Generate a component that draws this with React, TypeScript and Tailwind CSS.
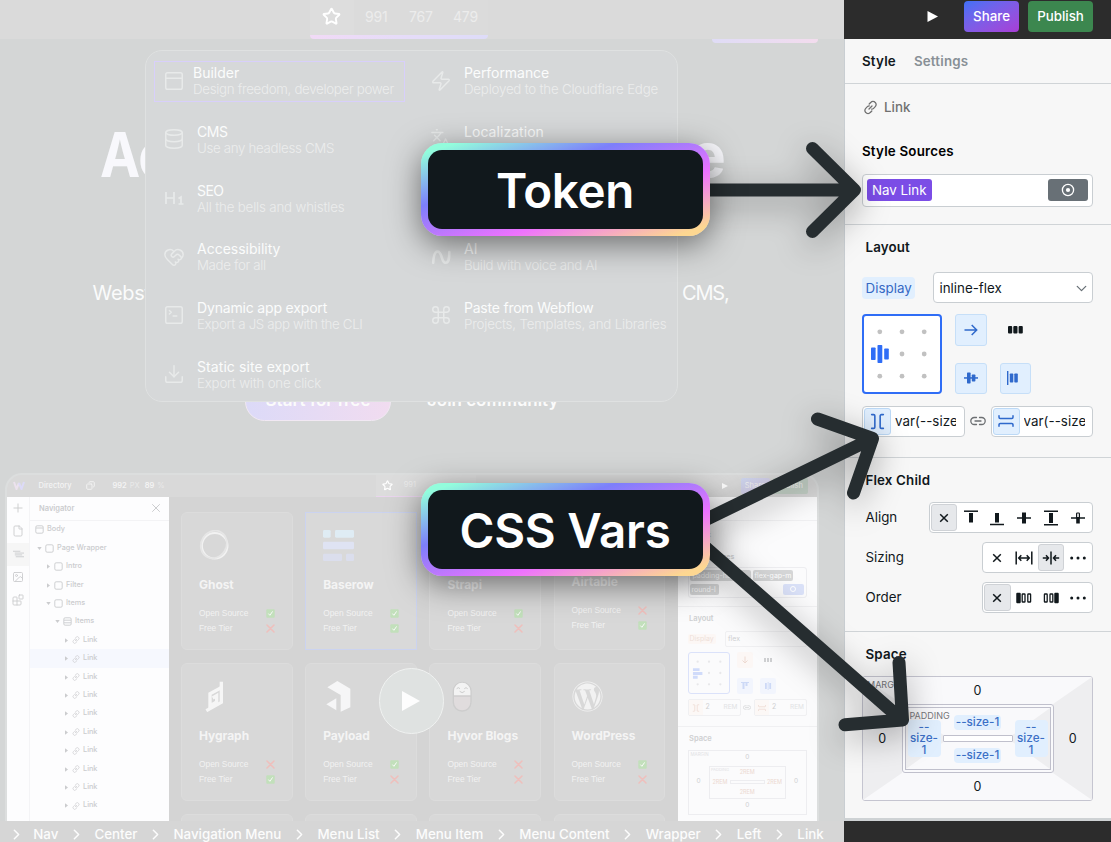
import React from "react";
import {
  PanelTop,
  Database,
  HeartHandshake,
  SquareTerminal,
  Download,
  Zap,
  Languages,
  Command,
  Star,
  ChevronRight,
  ChevronDown,
  Plus,
  File,
  Image as ImageIcon,
  Blocks,
  X,
  Copy,
} from "lucide-react";
import { FaWordpress } from "react-icons/fa";

/* ---------- small shared icons ---------- */

function ChainIcon({ className }: { className: string }) {
  return (
    <svg viewBox="0 0 16 16" className={className} fill="none" stroke="currentColor" strokeWidth="1.4" strokeLinecap="round">
      <path d="M6.600 4.200 8.200 2.700a3 3 0 0 1 4.900 0 3.100 3.100 0 0 1 0 4.400l-1.800 1.800a3 3 0 0 1-2 .9" />
      <path d="M9.400 11.800 7.800 13.300a3 3 0 0 1-4.900 0 3.100 3.100 0 0 1 0-4.400l1.800-1.800a3 3 0 0 1 2-.9" />
      <path d="m6.400 9.600 3.200-3.200" />
    </svg>
  );
}

function FlatLinkIcon({ className }: { className: string }) {
  return (
    <svg viewBox="0 0 16 10" className={className} fill="none" stroke="currentColor" strokeWidth="1.3" strokeLinecap="round">
      <path d="M6.500 1.500H4.300a3.500 3.500 0 0 0 0 7h2.200M9.500 1.500h2.200a3.500 3.500 0 0 1 0 7H9.500M5 5h6" />
    </svg>
  );
}

function GapColIcon({ className }: { className: string }) {
  return (
    <svg viewBox="0 0 16 16" className={className} fill="none" stroke="currentColor" strokeWidth="1.5" strokeLinecap="round" strokeLinejoin="round">
      <path d="M2.500 1.500h1.800a1.2 1.2 0 0 1 1.2 1.2v10.600a1.2 1.2 0 0 1-1.2 1.2H2.500M13.500 1.500h-1.800a1.2 1.2 0 0 0-1.2 1.2v10.600a1.2 1.2 0 0 0 1.2 1.2h1.800" />
    </svg>
  );
}

function GapRowIcon({ className }: { className: string }) {
  return (
    <svg viewBox="0 0 16 16" className={className} fill="none" stroke="currentColor" strokeWidth="1.5" strokeLinecap="round" strokeLinejoin="round">
      <path d="M1 2.800v1.500a1.2 1.2 0 0 0 1.2 1.200h11.600a1.2 1.2 0 0 0 1.2-1.200V2.800M1 13.200v-1.500a1.2 1.2 0 0 1 1.200-1.200h11.600a1.2 1.2 0 0 1 1.200 1.200v1.500" />
    </svg>
  );
}

/* ---------- builder top bar ---------- */

function CanvasTopBar() {
  return (
    <div className="flex h-[39px] shrink-0 bg-[#dadada] pl-[310px]">
      <div className="flex w-[178px] flex-col">
        <div className="flex h-[35px] items-center bg-[#dbdbdb] text-[14px] text-[#ececec]">
          <span className="flex h-full w-[44px] items-center justify-center bg-[#dddddd] pr-[1px] pb-[2px] text-white">
            <Star size={19} strokeWidth={2.4} />
          </span>
          <span className="w-[44px] pb-[2px] pl-[11px] tracking-[-0.2px]">991</span>
          <span className="w-[44px] pb-[2px] pl-[11px] tracking-[-0.2px]">767</span>
          <span className="w-[44px] pb-[2px] pl-[11px] tracking-[-0.2px]">479</span>
        </div>
        <div className="h-[4px] rounded-b-sm bg-gradient-to-r from-[#f1daf6] via-[#e6dcf8] to-[#dedcf8]" />
      </div>
    </div>
  );
}

/* ---------- hero menu ---------- */

type MenuEntry = { title: string; desc: string; icon: React.ReactNode; t?: string; d?: string };

const iconProps = { size: 22, strokeWidth: 1.6 };

const leftMenu: MenuEntry[] = [
  { title: "Builder", desc: "Design freedom, developer power", icon: <PanelTop {...iconProps} />, t: "tracking-[0px]", d: "tracking-[-0.310px]" },
  { title: "CMS", desc: "Use any headless CMS", icon: <Database {...iconProps} />, t: "tracking-[-0.4px]", d: "tracking-[-0.320px]" },
  {
    title: "SEO",
    desc: "All the bells and whistles",
    icon: (
      <svg viewBox="0 0 22 22" className="size-[22px]" fill="none" stroke="currentColor" strokeWidth="1.7">
        <path d="M3 5v12M11 5v12M3 11h8M15.500 11.500l2.500-1.500v7M15.500 17h5" />
      </svg>
    ),
    t: "tracking-[-0.6px]",
    d: "tracking-[-0.170px]",
  },
  { title: "Accessibility", desc: "Made for all", icon: <HeartHandshake {...iconProps} />, t: "tracking-[0px]", d: "tracking-[-0.350px]" },
  { title: "Dynamic app export", desc: "Export a JS app with the CLI", icon: <SquareTerminal {...iconProps} />, t: "tracking-[-0.170px]", d: "tracking-[-0.330px]" },
  { title: "Static site export", desc: "Export with one click", icon: <Download {...iconProps} />, t: "tracking-[0.080px]", d: "tracking-[-0.200px]" },
];

const rightMenu: MenuEntry[] = [
  { title: "Performance", desc: "Deployed to the Cloudflare Edge", icon: <Zap {...iconProps} />, t: "tracking-[-0.050px]", d: "tracking-[-0.210px]" },
  { title: "Localization", desc: "", icon: <Languages {...iconProps} />, t: "tracking-[0.050px]" },
  { title: "", desc: "", icon: null },
  {
    title: "AI",
    desc: "Build with voice and AI",
    icon: (
      <svg viewBox="0 0 22 22" className="size-[22px]" fill="none" stroke="currentColor" strokeWidth="2.600" strokeLinecap="round">
        <path d="M3.200 16.800C3.600 9.500 4.500 5.500 7.500 5.500c5 0 3.500 11.200 8 11.200 3.300 0 3.800-3.500 3.800-10.700" />
      </svg>
    ),
    d: "tracking-[-0.3px]",
  },
  { title: "Paste from Webflow", desc: "Projects, Templates, and Libraries", icon: <Command {...iconProps} />, t: "tracking-[-0.220px]", d: "tracking-[-0.180px]" },
];

function MenuItem({ item, selected }: { item: MenuEntry; selected?: boolean }) {
  return (
    <div
      className={
        selected
          ? "-mb-[4px] -ml-[9px] -mt-[4px] flex h-[41px] w-[251px] items-center gap-[8px] border border-[#d8cffb] pl-[8px]"
          : "flex h-[33px] items-center gap-[12px] whitespace-nowrap"
      }
    >
      <span className="-mt-[2px] flex w-[22px] justify-center text-[#e8eaea]">{item.icon}</span>
      <div className="flex flex-col whitespace-nowrap leading-[16.500px]">
        <span className={`text-[14px] text-[#fbfcfc] ${item.t ?? ""}`}>{item.title}</span>
        <span className={`-mt-[0.500px] h-[16.500px] text-[13.300px] font-light text-[#eceded] ${item.d ?? ""}`}>{item.desc}</span>
      </div>
    </div>
  );
}

function FeatureMenu() {
  return (
    <div className="absolute left-[145px] top-[11px] flex h-[352px] w-[533px] rounded-[17px] border border-[#dfe1e1] bg-[#d6d8d9] pl-[17px] pt-[14px]">
      <div className="flex w-[267px] flex-col gap-[25.700px]">
        {leftMenu.map((item, i) => (
          <MenuItem key={item.title} item={item} selected={i === 0} />
        ))}
      </div>
      <div className="flex flex-col gap-[25.700px]">
        {rightMenu.map((item, i) => (
          <MenuItem key={i} item={item} />
        ))}
      </div>
    </div>
  );
}

/* ---------- product preview ---------- */

const tree: { label: string; depth: number; kind: string; open?: boolean }[] = [
  { label: "Body", depth: -1, kind: "body" },
  { label: "Page Wrapper", depth: 0, kind: "box", open: true },
  { label: "Intro", depth: 1, kind: "box" },
  { label: "Filter", depth: 1, kind: "box" },
  { label: "Items", depth: 1, kind: "box", open: true },
  { label: "Items", depth: 2, kind: "list", open: true },
  ...Array.from({ length: 10 }, () => ({ label: "Link", depth: 3, kind: "link" })),
];

const indent: Record<string, string> = {
  "-1": "pl-[5px]",
  "0": "pl-[7px]",
  "1": "pl-[16px]",
  "2": "pl-[25px]",
  "3": "pl-[34px]",
};

function TreeIcon({ kind }: { kind: string }) {
  if (kind === "link") return <ChainIcon className="size-[8px]" />;
  return (
    <svg viewBox="0 0 9 9" className="size-[9px]" fill="none" stroke="currentColor" strokeWidth="0.9">
      <rect x="0.800" y="0.800" width="7.400" height="7.400" rx="1.300" />
      {kind === "body" && <path d="M1 3h7" />}
      {kind === "list" && <path d="M1 3.200h7M1 5.800h7" />}
    </svg>
  );
}

function Navigator() {
  return (
    <div className="flex w-[162px] shrink-0 bg-[#fdfdfe] text-[#cbccce]">
      <div className="flex w-[23px] flex-col items-center border-r border-[#f4f4f6]">
        <span className="flex h-[23px] items-center"><Plus size={14} strokeWidth={1.600} /></span>
        <span className="flex h-[23px] items-center"><File size={12} strokeWidth={1.800} /></span>
        <span className="flex h-[23px] w-full items-center justify-center bg-[#f6f6f6]">
          <svg viewBox="0 0 12 8" className="h-[8px] w-[11px]" stroke="currentColor" strokeWidth="1">
            <path d="M0 1h8M2 3h10M2 5h8M3 7h9" />
          </svg>
        </span>
        <span className="flex h-[23px] items-center"><ImageIcon size={12} strokeWidth={1.800} /></span>
        <span className="flex h-[23px] items-center"><Blocks size={12} strokeWidth={1.800} /></span>
      </div>
      <div className="flex flex-1 flex-col">
        <div className="flex h-[24px] items-center justify-between border-b border-[#f3f3f5] pl-[9px] pr-[6px]">
          <span className="pt-[1px] text-[7.500px] font-semibold">Navigator</span>
          <X size={14} strokeWidth={1.700} />
        </div>
        {tree.map((row, i) => (
          <div
            key={i}
            className={`flex h-[18.400px] shrink-0 items-center gap-[3px] pt-[0.500px] text-[7.300px] font-medium ${indent[String(row.depth)]} ${i === 7 ? "bg-[#f6f8fe]" : ""}`}
          >
            {row.depth >= 0 && (
              <svg viewBox="0 0 5 5" className="size-[5px]" fill="currentColor">
                <path d={row.open ? "M0.300 1h4.400L2.500 4z" : "M1 0.300v4.400L4 2.500z"} />
              </svg>
            )}
            <TreeIcon kind={row.kind} />
            <span>{row.label}</span>
          </div>
        ))}
      </div>
    </div>
  );
}

function Mark({ ok }: { ok: boolean }) {
  return ok ? (
    <svg viewBox="0 0 9 9" className="size-[9px]">
      <rect x="0.300" y="0.300" width="8.400" height="8.400" rx="1" fill="#c2e0bb" />
      <path d="m2.400 4.600 1.500 1.700 2.700-3.900" fill="none" stroke="#fafafa" strokeWidth="1" />
    </svg>
  ) : (
    <svg viewBox="0 0 9 9" className="size-[9px]" stroke="#efbfbc" strokeWidth="1.500" strokeLinecap="round">
      <path d="m1 1 7 7M8 1 1 8" />
    </svg>
  );
}

const logos: Record<string, React.ReactNode> = {
  Ghost: (
    <svg viewBox="0 0 31 31" className="size-[31px]" fill="none" stroke="#f2f2f2">
      <circle cx="15.800" cy="15.800" r="12.800" strokeWidth="1.800" />
      <ellipse cx="14.600" cy="14.600" rx="12.600" ry="14.200" strokeWidth="1.800" stroke="#e6e6e6" transform="rotate(30 15 15)" />
    </svg>
  ),
  Baserow: (
    <svg viewBox="0 0 93 93" className="size-[31px]">
      <g fill="#dfecf4"><rect width="23" height="23" rx="4" /><rect x="36" width="57" height="23" rx="4" /></g>
      <rect y="35" width="93" height="23" rx="4" fill="#dfe3f3" />
      <g fill="#dbdeed"><rect y="71" width="57" height="22" rx="4" /><rect x="69" y="71" width="24" height="22" rx="4" /></g>
    </svg>
  ),
  Hygraph: (
    <svg viewBox="0 0 93 93" className="size-[31px]" fill="none" stroke="#f6f6f6" strokeWidth="10">
      <path d="M67 2v62L22 89" />
      <path d="M66 20 33 38v36l20-11V44l-12 7" />
    </svg>
  ),
  Payload: (
    <svg viewBox="0 0 93 93" className="size-[31px]" fill="#f6f6f7">
      <path d="M43 0 82 23v56L53 92V42L13 19z" />
      <path d="M10 70 40 52v36z" />
    </svg>
  ),
  "Hyvor Blogs": (
    <svg viewBox="0 0 93 93" className="size-[31px]">
      <rect x="19" y="4" width="53" height="86" rx="26" fill="#e0dcdd" stroke="#cdcdcd" strokeWidth="4" />
      <path d="M21 44V30a24.500 24.500 0 0 1 49 0v14z" fill="#f3f3f3" />
      <path d="M19 45h53" stroke="#cdcdcd" strokeWidth="4" />
      <path d="M29 23q5-6 10 0M52 23q5-6 10 0M38 31q7 8 15 0" fill="none" stroke="#cdcdcd" strokeWidth="3" />
    </svg>
  ),
  WordPress: <FaWordpress className="size-[31px] text-[#f2f2f2]" />,
};

type Card = { name: string; open: boolean; free: boolean; selected?: boolean };

const cardRows: Card[][] = [
  [
    { name: "Ghost", open: true, free: false },
    { name: "Baserow", open: true, free: true, selected: true },
    { name: "Strapi", open: true, free: false },
    { name: "Airtable", open: false, free: true },
  ],
  [
    { name: "Hygraph", open: false, free: true },
    { name: "Payload", open: true, free: false },
    { name: "Hyvor Blogs", open: false, free: false },
    { name: "WordPress", open: true, free: false },
  ],
];

function CardGrid() {
  return (
    <div className="flex flex-1 flex-col gap-[13px] overflow-hidden bg-[#d4d4d4] pl-[12px] pt-[15px]">
      {cardRows.map((row, r) => (
        <div key={r} className="flex gap-[12.500px]">
          {row.map((c) => (
            <div
              key={c.name}
              className={`flex h-[138px] w-[111.700px] shrink-0 flex-col border pl-[17px] pr-[17px] pt-[17px] ${
                c.selected ? "border-[#cbd3f0] bg-[#d9d9d9]" : "rounded-[6px] border-[#dcdcdc] bg-[#d8d8d8]"
              }`}
            >
              <div className={c.name === "Airtable" ? "h-[28.500px]" : "h-[31px]"}>{logos[c.name]}</div>
              <span className="mt-[16px] whitespace-nowrap text-[12px] font-bold leading-[16px] tracking-[-0.050px] text-[#f4f4f4]">{c.name}</span>
              <div className="mt-[13px] flex h-[15px] items-center justify-between font-['Liberation_Sans',sans-serif] text-[8.400px] text-[#f2f2f2]">
                <span>Open Source</span>
                <Mark ok={c.open} />
              </div>
              <div className="flex h-[15px] items-center justify-between font-['Liberation_Sans',sans-serif] text-[8.400px] text-[#f2f2f2]">
                <span>Free Tier</span>
                <Mark ok={c.free} />
              </div>
            </div>
          ))}
        </div>
      ))}
      <div className="flex gap-[12.500px]">
        {[0, 1, 2, 3].map((n) => (
          <div key={n} className="h-[20px] w-[111.700px] shrink-0 rounded-t-[6px] border border-[#dcdcdc] bg-[#d8d8d8]" />
        ))}
      </div>
    </div>
  );
}

function MiniPanel() {
  return (
    <div className="flex w-[138.500px] shrink-0 flex-col bg-[#fbfbfc] text-[7px] text-[#cfd0d2]">
      <div className="h-[24px] border-b border-[#f0f0f2]" />
      <div className="flex h-[86px] flex-col border-b border-[#f0f0f2] pl-[9.500px] pr-[9.500px]">
        <span className="mt-[9px] pl-[10px] leading-[10px]">Link</span>
        <span className="mt-[12px] font-semibold leading-[10px]">Style Sources</span>
        <div className="mt-[5px] flex h-[31px] flex-wrap content-center gap-x-[2px] gap-y-[3px] rounded-[3px] border border-[#ededf0] pl-[1px] leading-[11px] text-white">
          <span className="w-[61px] rounded-[2px] bg-[#d5d6d7] px-[3px]">padding-horiz-l</span>
          <span className="rounded-[2px] bg-[#d5d6d7] px-[2px]">flex-gap-m</span>
          <span className="w-[29px] rounded-[2px] bg-[#d5d6d7] px-[2px]">round-l</span>
          <span className="ml-[62px] flex w-[21px] items-center justify-center rounded-[2px] bg-[#dae1f8]">
            <span className="size-[6px] rounded-full border border-white" />
          </span>
        </div>
      </div>
      <div className="flex h-[120px] flex-col border-b border-[#f0f0f2] pl-[9.500px] pr-[9.500px] pt-[7px]">
        <span className="pl-[1.500px] text-[7.500px] font-semibold leading-[10px]">Layout</span>
        <div className="mt-[7px] flex h-[16.500px] items-center justify-between">
          <span className="rounded-[2px] bg-[#fcf7f5] px-[2px] text-[7px] text-[#eedfd9]">Display</span>
          <span className="flex h-full w-[82px] items-center rounded-[2px] border border-[#f0f0f2] pl-[2px]">flex</span>
        </div>
        <div className="mt-[5px] flex gap-[7px]">
          <div className="flex size-[42px] items-center rounded-[3px] border-[1.500px] border-[#dbe2fa] pl-[3px]">
            <svg viewBox="0 0 36 36" className="size-[34px]">
              <path d="M1 13h7v3H1zM1 17h10v3H1zM1 21h5v3H1z" fill="#d0dbfa" />
              <g fill="#e8e8ea"><circle cx="6" cy="6" r="1.200" /><circle cx="18" cy="6" r="1.200" /><circle cx="30" cy="6" r="1.200" /><circle cx="18" cy="18" r="1.200" /><circle cx="30" cy="18" r="1.200" /><circle cx="6" cy="30" r="1.200" /><circle cx="18" cy="30" r="1.200" /><circle cx="30" cy="30" r="1.200" /></g>
            </svg>
          </div>
          <div className="flex flex-col justify-between">
            <div className="flex items-center gap-[11px]">
              <span className="flex size-[16px] items-center justify-center rounded-[2px] bg-[#fcf7f5] text-[#eddad2]">
                <svg viewBox="0 0 8 8" className="size-[8px]" fill="none" stroke="currentColor"><path d="M4 0.500v6.500M1.500 4.500 4 7l2.500-2.500" /></svg>
              </span>
              <svg viewBox="0 0 8 4" className="h-[4px] w-[8px]" fill="currentColor"><path d="M0 0h2v4H0zM3 0h2v4H3zM6 0h2v4H6z" /></svg>
            </div>
            <div className="flex gap-[7px]">
              <span className="flex size-[16px] items-center justify-center rounded-[2px] bg-[#f2f5fd]">
                <svg viewBox="0 0 8 8" className="size-[8px]" fill="#cdd9f6"><path d="M0 0h8v1H0zM1.500 1h2v6h-2zM4.500 1h2v3h-2z" /></svg>
              </span>
              <span className="flex size-[16px] items-center justify-center rounded-[2px] bg-[#f2f5fd]">
                <svg viewBox="0 0 8 8" className="size-[8px]" fill="#cdd9f6"><path d="M3.700 0h.8v8h-.8zM1 1h1.800v6H1zM5.300 1h1.800v6H5.300z" /></svg>
              </span>
            </div>
          </div>
        </div>
        <div className="mt-[5px] flex h-[17px] items-center justify-between">
          {[0, 1].map((n) => (
            <React.Fragment key={n}>
              {n === 1 && <FlatLinkIcon className="h-[5px] w-[8px]" />}
              <span className="flex h-full w-[53px] items-center rounded-[2px] border border-[#f0f0f2]">
                <span className="flex h-full w-[14px] items-center justify-center bg-[#fcf8f6] text-[#eddad2]">
                  {n === 0 ? <GapColIcon className="size-[8px]" /> : <GapRowIcon className="size-[8px]" />}
                </span>
                <span className="flex-1 pl-[3px]">2</span>
                <span className="pr-[2px] text-[6.500px] text-[#e1e2e4]">REM</span>
              </span>
            </React.Fragment>
          ))}
        </div>
      </div>
      <div className="flex flex-col px-[9.500px] pt-[6px]">
        <span className="pl-[1.500px] text-[7.500px] font-semibold leading-[11px]">Space</span>
        <div className="mt-[6px] grid h-[65px] grid-cols-[20px_minmax(0,1fr)_20px] grid-rows-[15px_minmax(0,1fr)_15px] place-items-center border border-[#ededf0] text-[6.500px]">
          <span className="self-start justify-self-start pl-[2px] pt-[1px] text-[4.500px] text-[#e2e2e5]">MARGIN</span><span>0</span><span />
          <span>0</span>
          <div className="grid h-full w-full grid-cols-[21px_minmax(0,1fr)_21px] grid-rows-3 place-items-center border border-[#ededf0] text-[5.500px] text-[#ecd9d1]">
            <span className="-mt-[3px] text-[4px] text-[#e2e2e5]">PADDING</span><span>2REM</span><span />
            <span>2REM</span><span className="h-[4px] w-[35px] border border-[#ededf0]" /><span>2REM</span>
            <span /><span>2REM</span><span />
          </div>
          <span>0</span>
          <span /><span>0</span><span />
        </div>
      </div>
    </div>
  );
}

function ProductPreview() {
  return (
    <div className="relative ml-[5px] mt-[52px] flex h-[348px] w-[813.500px] shrink-0 flex-col overflow-hidden rounded-t-[17px] border-x-2 border-t-2 border-[#dcdede] bg-[#d9d9d9]">
      <div className="flex h-[22px] shrink-0 items-center text-[7.500px] text-[#f4f4f4]">
        <svg viewBox="0 0 12 9" className="ml-[5.500px] h-[9px] w-[12px]" fill="none" strokeWidth="2">
          <path d="M1 1l2.500 7L6 2" stroke="#ece2ee" />
          <path d="M6 2l2.500 6L11 1" stroke="#dcdaf8" />
        </svg>
        <span className="ml-[14px] w-[47px] font-medium">Directory</span>
        <Copy size={9} strokeWidth={2.400} className="-scale-x-100" />
        <span className="ml-[18px] font-semibold">992</span>
        <span className="ml-[3px] text-[#e9e9e9]">PX</span>
        <span className="ml-[5px] font-semibold">89</span>
        <span className="ml-[3px] text-[#e9e9e9]">%</span>
        <div className="ml-[211px] flex h-full w-[100px] items-center border-b-[1.500px] border-[#ead5ee] bg-[#dcdcdc]">
          <span className="flex w-[23px] justify-center text-white"><Star size={11} strokeWidth={2.600} /></span>
          <span className="pl-[5px] text-[#ebebeb]">991</span>
        </div>
        <svg viewBox="0 0 6 6" className="ml-auto size-[6px]" fill="#fff"><path d="M0 0 6 3 0 6z" /></svg>
        <span className="ml-[13px] flex h-[16px] w-[29px] items-center justify-center rounded-[2px] bg-gradient-to-br from-[#cdd5ee] to-[#dccfe9]">Share</span>
        <span className="ml-[3px] mr-[9px] flex h-[16px] w-[35px] items-center justify-center rounded-[2px] bg-[#c5d2c8]">Publish</span>
      </div>
      <div className="flex flex-1">
        <Navigator />
        <CardGrid />
        <MiniPanel />
      </div>
      <div className="absolute left-[371.500px] top-[193.500px] flex size-[65.500px] items-center justify-center rounded-full border border-[#f0f2f1] bg-[#dfe2e1]">
        <svg viewBox="0 0 18 20" className="h-[20px] w-[18px]" fill="#fdfdfd"><path d="M0 0 18 10 0 20z" /></svg>
      </div>
    </div>
  );
}

function Hero() {
  return (
    <div className="relative flex h-[782px] shrink-0 flex-col overflow-hidden bg-[#d4d6d6]">
      <div className="ml-[712px] h-[3.500px] w-[106px] shrink-0 rounded-b-[6px] bg-gradient-to-r from-[#dfdcf6] to-[#f3dcee]" />
      <div className="mt-[81px] flex h-[62px] shrink-0 justify-between pl-[99.500px] pr-[118px] text-[62px] font-bold leading-[62px] text-[#f8f8fc]">
        <span className="origin-left scale-x-[0.870] tracking-[-1px]">Ac</span>
        <span>e</span>
      </div>
      <div className="mt-[92px] flex h-[30px] shrink-0 justify-between pl-[92.500px] pr-[115.500px] text-[20px] leading-[30px] text-[#fafbfb]">
        <span className="tracking-[-0.300px]">Webst</span>
        <span className="tracking-[-1.200px]">CMS,</span>
      </div>
      <div className="mt-[74px] flex h-[39px] shrink-0 items-center pl-[245px] text-[17px] font-semibold text-[#fbfbfb]">
        <span className="flex h-full w-[146px] items-center justify-center rounded-full border border-[#f1e8f3] bg-gradient-to-r from-[#dcdaf8] to-[#f1dcf0]">
          Start for free
        </span>
        <span className="ml-[36px] tracking-[-0.030px]">Join community</span>
      </div>
      <ProductPreview />
      <FeatureMenu />
    </div>
  );
}

const crumbs = ["Nav", "Center", "Navigation Menu", "Menu List", "Menu Item", "Menu Content", "Wrapper", "Left", "Link"];

function Breadcrumbs() {
  return (
    <div className="flex h-[27px] shrink-0 items-center whitespace-nowrap bg-[#d6d6d6] text-[13.330px] font-medium text-[#fcfcfc]">
      {crumbs.map((c, i) => (
        <React.Fragment key={c}>
          <span className={`flex shrink-0 justify-center ${i === 0 ? "w-[33.200px]" : "w-[36.100px]"}`}>
            <ChevronRight size={17} strokeWidth={2.200} />
          </span>
          <span>{c}</span>
        </React.Fragment>
      ))}
    </div>
  );
}

/* ---------- style panel ---------- */

function Row({ label, children }: { label: string; children: React.ReactNode }) {
  return (
    <div className="flex h-[31px] items-center justify-between pl-[3.500px]">
      <span>{label}</span>
      <div className="flex h-[31px] rounded-[4px] border border-[#c9ced2] bg-white p-[1px]">{children}</div>
    </div>
  );
}

function Cell({ on, children }: { on?: boolean; children: React.ReactNode }) {
  return (
    <span
      className={`flex h-[27px] w-[26.750px] items-center justify-center ${
        on ? "rounded-[3px] border border-[#cfd2d6] bg-[#e6e8eb]" : ""
      }`}
    >
      <svg viewBox="0 0 18 18" className="size-[18px] shrink-0 text-[#11181c]" fill="none" stroke="currentColor" strokeWidth="1.500">
        {children}
      </svg>
    </span>
  );
}

const cross = <path d="m5.200 5.200 7.600 7.600M12.800 5.200l-7.600 7.600" strokeWidth="1.500" />;
const dots = (
  <g fill="currentColor" stroke="none">
    <circle cx="2.700" cy="9" r="1.500" />
    <circle cx="9" cy="9" r="1.500" />
    <circle cx="15.300" cy="9" r="1.500" />
  </g>
);

function BlueButton({ children }: { children: React.ReactNode }) {
  return (
    <span className="flex size-[31.500px] items-center justify-center rounded-[3px] border border-[#c6dff8] bg-[#e1effe] text-[#2f69cc]">
      {children}
    </span>
  );
}

function GapInput({ icon, w }: { icon: React.ReactNode; w: "a" | "b" }) {
  return (
    <div className={`flex h-[31.500px] items-center rounded-[4px] border border-[#c9ced2] bg-white p-[1px] ${w === "a" ? "w-[103px]" : "w-[102.500px]"}`}>
      <span className="flex h-[27.500px] w-[27px] items-center justify-center rounded-[3px] border border-[#bcd9f6] bg-[#e1effe] text-[#2f69cc]">
        {icon}
      </span>
      <span className="ml-[4px] mt-[1px] w-[61px] overflow-hidden whitespace-nowrap text-[13.330px] tracking-[0.050px]">var(--size</span>
    </div>
  );
}

function Bevel({ inner }: { inner?: boolean }) {
  return (
    <svg
      viewBox={inner ? "0 0 146 63" : "0 0 229 123"}
      preserveAspectRatio="none"
      className="absolute inset-0 size-full"
    >
      <path d="M0 0h229v123H0z" fill="#f9f9fb" />
      <path
        d={inner ? "M0 0 38 28v7L0 63zM146 0 108 28v7l38 28z" : "M0 0 39 27v69L0 123zM229 0 190 27v69l39 27z"}
        fill="#eeeef0"
      />
    </svg>
  );
}

const tag = "rounded-[4px] bg-[#e1effe] text-center font-medium text-[#3b6fc6]";

function SideTag() {
  return (
    <div className={`${tag} flex h-[37px] w-[33px] flex-col justify-center pt-[1px] leading-[11.200px]`}>
      <span>--</span>
      <span>size-</span>
      <span>1</span>
    </div>
  );
}

function StylePanel() {
  return (
    <div className="flex w-[267px] shrink-0 flex-col text-[13.330px] text-[#11181c]">
      <div className="flex h-[39px] shrink-0 items-start bg-[#2c2c2c] pt-[1px] font-medium text-white">
        <svg viewBox="0 0 11 11" className="ml-[83px] mt-[10px] size-[11px]" fill="#fff"><path d="M0.500 0 11 5.500 0.500 11z" strokeLinejoin="round" /></svg>
        <span className="ml-[26px] flex h-[31px] w-[55px] items-center justify-center rounded-[4px] bg-gradient-to-br from-[#3d70f6] to-[#a83cd6]">Share</span>
        <span className="ml-[9px] flex h-[31px] w-[65px] items-center justify-center rounded-[4px] bg-[#3c874f]">Publish</span>
      </div>
      <div className="flex h-[779px] shrink-0 flex-col border-l border-[#c9ced2] bg-[#f7f7f7]">
        <div className="flex h-[45px] shrink-0 items-center gap-[18px] border-b border-[#d0d4d7] pl-[17px] pt-[1px] font-semibold tracking-[0.200px]">
          <span>Style</span>
          <span className="text-[#889096]">Settings</span>
        </div>
        <div className="flex h-[141px] shrink-0 flex-col border-b border-[#d0d4d7] pl-[17px] pr-[18px]">
          <div className="mt-[15px] flex h-[16px] items-center gap-[6px] font-medium text-[#707070]">
            <ChainIcon className="ml-[1px] size-[15px]" />
            <span className="pt-[1px]">Link</span>
          </div>
          <span className="mt-[27px] font-semibold leading-[18px] tracking-[0.200px] text-black">Style Sources</span>
          <div className="mt-[14px] flex h-[33px] items-center justify-between rounded-[4px] border border-[#c9ced2] bg-white px-[4px] pb-[1px]">
            <span className="flex h-[22px] items-center rounded-[3px] bg-[#7b4de6] px-[5px] pt-[1px] text-white">Nav Link</span>
            <span className="flex h-[22px] w-[40px] items-center justify-center rounded-[3px] bg-[#687076]">
              <svg viewBox="0 0 14 14" className="size-[14px]" fill="none" stroke="#fff" strokeWidth="1.300">
                <circle cx="7" cy="7" r="5.600" />
                <circle cx="7" cy="7" r="2.100" fill="#fff" stroke="none" />
              </svg>
            </span>
          </div>
        </div>

        <div className="flex h-[233px] shrink-0 flex-col border-b border-[#d0d4d7] pl-[17px] pr-[18px]">
          <span className="mt-[13px] pl-[3.500px] font-semibold leading-[18px] tracking-[0.150px]">Layout</span>
          <div className="mt-[16px] flex h-[31px] items-center justify-between">
            <span className="mt-[1px] flex h-[22px] items-center rounded-[4px] bg-[#e1effe] px-[3.500px] pt-[1px] tracking-[0.050px] text-[#3569c4]">Display</span>
            <span className="flex h-full w-[160px] items-center justify-between rounded-[4px] border border-[#c9ced2] bg-white pl-[5.500px] pr-[2px]">
              <span className="pt-[2px]">inline-flex</span>
              <ChevronDown size={17} strokeWidth={1.800} className="mt-[1px] text-[#687076]" />
            </span>
          </div>
          <div className="mt-[11px] flex gap-[13px]">
            <div className="h-[80px] w-[80px] rounded-[4px] border-2 border-[#2f6df6] bg-white">
              <svg viewBox="0 0 76 76" className="size-[76px]">
                <g fill="#c1c1c1">
                  {[15.800, 38, 60.200].map((y) =>
                    [15.800, 38, 60.200].map((x) =>
                      x < 20 && y > 30 && y < 45 ? null : <circle key={`${x}-${y}`} cx={x} cy={y} r="2.400" />
                    )
                  )}
                </g>
                <g fill="#2f6df6">
                  <rect x="7" y="31.500" width="4.600" height="12.500" rx="0.800" />
                  <rect x="13.500" y="29" width="4.800" height="18" rx="0.800" />
                  <rect x="20.200" y="32.500" width="4.600" height="11" rx="0.800" />
                </g>
              </svg>
            </div>
            <div className="flex flex-col justify-between">
              <div className="flex items-center gap-[21px]">
                <BlueButton>
                  <svg viewBox="0 0 14 14" className="size-[14px]" fill="none" stroke="currentColor" strokeWidth="1.500"><path d="M0.500 7h12M7.700 2l5 5-5 5" /></svg>
                </BlueButton>
                <svg viewBox="0 0 15 8" className="h-[8px] w-[15px]" fill="#11181c">
                  <rect width="4.200" height="7.500" rx="1" /><rect x="5.300" width="4.200" height="7.500" rx="1" /><rect x="10.600" width="4.200" height="7.500" rx="1" />
                </svg>
              </div>
              <div className="flex gap-[13px]">
                <BlueButton>
                  <svg viewBox="0 0 16 14" className="h-[14px] w-[16px]" fill="currentColor">
                    <rect x="1" y="6.200" width="14" height="1.500" /><rect x="4" y="1.500" width="3.600" height="11" rx="0.700" /><rect x="8.800" y="3.500" width="3.600" height="7" rx="0.700" />
                  </svg>
                </BlueButton>
                <BlueButton>
                  <svg viewBox="0 0 14 14" className="mr-[4px] size-[14px]" fill="currentColor">
                    <rect x="1" width="1.400" height="14" /><rect x="3.800" y="2.500" width="3.500" height="9" rx="0.700" /><rect x="8.300" y="2.500" width="3.500" height="9" rx="0.700" />
                  </svg>
                </BlueButton>
              </div>
            </div>
          </div>
          <div className="mt-[11.500px] flex items-center justify-between">
            <GapInput w="a" icon={<GapColIcon className="size-[17px]" />} />
            <FlatLinkIcon className="h-[10px] w-[16px] text-[#6c6f72]" />
            <GapInput w="b" icon={<GapRowIcon className="size-[16px]" />} />
          </div>
        </div>

        <div className="flex h-[174px] shrink-0 flex-col border-b border-[#d0d4d7] pl-[17px] pr-[18px]">
          <span className="mt-[13px] pl-[3.500px] font-semibold leading-[18px] tracking-[0.150px]">Flex Child</span>
          <div className="mt-[13px] flex flex-col gap-[9px]">
            <Row label="Align">
              <Cell on>{cross}</Cell>
              <Cell><path d="M2 2.200h14" /><path d="M9 4v9.500" strokeWidth="4" /></Cell>
              <Cell><path d="M2 15.500h14" /><path d="M9 4v9.500" strokeWidth="4" /></Cell>
              <Cell><path d="M2 9h14" /><path d="M9 3.500v11" strokeWidth="4" /></Cell>
              <Cell><path d="M2 2.200h14M2 15.800h14" /><path d="M9 4v10" strokeWidth="4" /></Cell>
              <Cell><path d="M2 9h14" /><rect x="7.600" y="4" width="2.800" height="5" rx="0.800" strokeWidth="1.200" /><path d="M9 8v6.500" strokeWidth="3.600" /></Cell>
            </Row>
            <Row label="Sizing">
              <Cell>{cross}</Cell>
              <Cell><path d="M1.200 2.500v13M16.800 2.500v13M4 9h10M6.300 6.200 3.700 9l2.600 2.800M11.700 6.200 14.300 9l-2.600 2.800" /></Cell>
              <Cell on><path d="M9 2.500v13M0.800 9h5.500M11.700 9h5.500M4 6.200 6.500 9 4 11.800M14 6.200 11.500 9l2.500 2.800" /></Cell>
              <Cell>{dots}</Cell>
            </Row>
            <Row label="Order">
              <Cell on>{cross}</Cell>
              <Cell><rect x="1.500" y="4" width="4" height="10" rx="0.800" fill="currentColor" strokeWidth="0.500" /><rect x="7.200" y="5" width="2.800" height="8" rx="0.600" strokeWidth="1.300" /><rect x="12.800" y="5" width="2.800" height="8" rx="0.600" strokeWidth="1.300" /></Cell>
              <Cell><rect x="12.500" y="4" width="4" height="10" rx="0.800" fill="currentColor" strokeWidth="0.500" /><rect x="2.400" y="5" width="2.800" height="8" rx="0.600" strokeWidth="1.300" /><rect x="8" y="5" width="2.800" height="8" rx="0.600" strokeWidth="1.300" /></Cell>
              <Cell>{dots}</Cell>
            </Row>
          </div>
        </div>

        <div className="flex shrink-0 flex-col pl-[17px] pr-[18px]">
          <span className="mt-[13px] pl-[3.500px] font-semibold leading-[18px] tracking-[0.150px]">Space</span>
          <div className="relative mt-[13px] grid h-[125px] grid-cols-[38.500px_minmax(0,1fr)_38.500px] grid-rows-[27px_minmax(0,1fr)_27px] place-items-center overflow-hidden rounded-[3px] border border-[#c5c5d0] text-[12.500px]">
            <Bevel />
            <span className="relative self-start justify-self-start pl-[4px] pt-[1px] text-[9px] text-[#76767a]">MARGIN</span>
            <span className="relative pt-[1px]">0</span>
            <span />
            <span className="relative pt-[1px]">0</span>
            <div className="relative size-full rounded-[3px] border border-[#c0c0cc] bg-[#fafafc] p-[2px]">
              <div className="relative grid size-full grid-cols-[37px_minmax(0,1fr)_37px] grid-rows-[minmax(0,1fr)_7px_minmax(0,1fr)] place-items-center border border-[#c0c0cc] text-[11.700px]">
                <Bevel inner />
                <div className="relative col-start-1 row-span-3 row-start-1">
                  <SideTag />
                </div>
                <span className={`${tag} relative col-start-2 row-start-1 mt-[2px] h-[15px] w-[47px] leading-[15px]`}>--size-1</span>
                <span className="relative col-start-2 row-start-2 h-[7px] w-[70px] rounded-[1px] border border-[#c0c0cc] bg-white" />
                <span className={`${tag} relative col-start-2 row-start-3 h-[15px] w-[47px] leading-[15px]`}>--size-1</span>
                <div className="relative col-start-3 row-span-3 row-start-1">
                  <SideTag />
                </div>
                <span className="absolute left-[4px] top-[2px] text-[9px] leading-[12px] text-[#76767a]">PADDING</span>
              </div>
            </div>
            <span className="relative pt-[1px]">0</span>
            <span />
            <span className="relative pt-[1px]">0</span>
            <span />
          </div>
        </div>
      </div>
      <div className="h-[3px] shrink-0 bg-[#ced2d4]" />
      <div className="flex-1 bg-[#2c2c2c]" />
    </div>
  );
}

/* ---------- annotations ---------- */

function Arrows() {
  return (
    <svg
      viewBox="0 0 1111 842"
      className="pointer-events-none absolute inset-0 h-[842px] w-[1111px] drop-shadow-[0_8px_16px_rgba(0,0,0,0.35)]"
      fill="none"
      stroke="#262d30"
      strokeWidth="13"
      strokeLinecap="round"
      strokeLinejoin="round"
    >
      <path d="M700 190H854M812.500 148.500 854.500 190 812.500 231.500" />
      <path d="M700 522.300 872.500 438.500M817.500 419 872.500 438.500 853.500 493" />
      <path d="M700 542.700 902 720M899 662.500 902.500 720 845 724.700" />
    </svg>
  );
}

function Callout({ label, place, track }: { label: string; place: string; track: string }) {
  return (
    <div
      className={`absolute left-[421px] h-[93px] w-[289px] rounded-[21px] bg-[linear-gradient(to_bottom_right,#92fddc_6%,#7d7ffb_34%,#ed72fe_65%,#fdd791_94%)] p-[7px] shadow-[0_8px_32px_rgba(0,0,0,0.5)] ${place}`}
    >
      <div className="flex size-full items-center justify-center rounded-[14px] bg-[#11181c] pt-[2px] text-[47.500px] font-semibold text-white">
        <span className={track}>{label}</span>
      </div>
    </div>
  );
}

export default function App() {
  return (
    <div className="relative flex h-[842px] w-[1111px] overflow-hidden font-['Inter',sans-serif]">
      <div className="flex h-full w-[844px] shrink-0 flex-col overflow-hidden">
        <CanvasTopBar />
        <Hero />
        <Breadcrumbs />
      </div>
      <StylePanel />
      <Arrows />
      <Callout label="Token" place="top-[143px]" track="-ml-[1px] tracking-[-0.300px]" />
      <Callout label="CSS Vars" place="top-[483px]" track="-ml-[1px] tracking-[-0.200px]" />
    </div>
  );
}
